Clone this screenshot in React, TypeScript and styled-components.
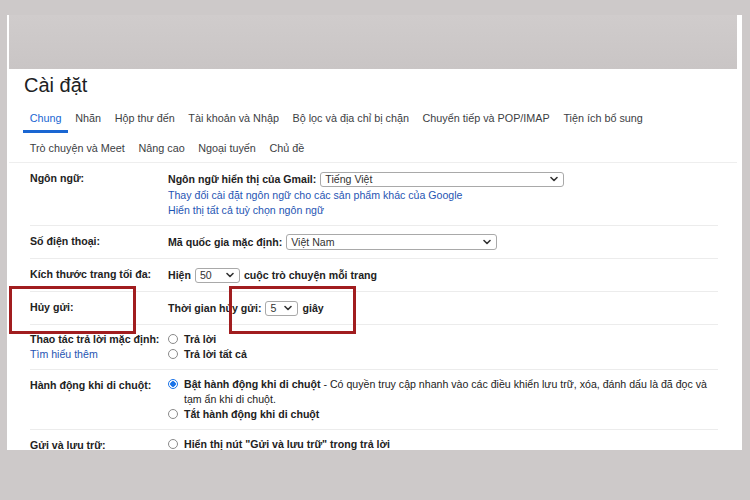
import React from "react";
import styled, { createGlobalStyle } from "styled-components";

const GlobalStyle = createGlobalStyle`
  html, body {
    margin: 0;
    padding: 0;
    background: #cdc9c9;
    font-family: "Liberation Sans", Arial, sans-serif;
    color: #222;
  }
`;

const tabsTop = ["Chung", "Nhãn", "Hộp thư đến", "Tài khoản và Nhập", "Bộ lọc và địa chỉ bị chặn", "Chuyển tiếp và POP/IMAP", "Tiện ích bổ sung"];
const tabsBottom = ["Trò chuyện và Meet", "Nâng cao", "Ngoại tuyến", "Chủ đề"];

const Chevron = () => (
  <svg width="8" height="6" viewBox="0 0 8 6">
    <path d="M1 1.5 L4 4.5 L7 1.5" fill="none" stroke="#333" strokeWidth="1.6" strokeLinecap="round" strokeLinejoin="round" />
  </svg>
);

const Dropdown = ({ value, w, h = 15 }: { value: string; w: number; h?: number }) => (
  <Select $w={w} $h={h}>
    <span>{value}</span>
    <Chevron />
  </Select>
);

const App = () => {
  return (
    <>
      <GlobalStyle />
      <Page>
        <Panel>
          <TopBand />
          <Title>Cài đặt</Title>
          <TabRow>
            {tabsTop.map((t, i) => (
              <Tab key={t} $active={i === 0}>{t}</Tab>
            ))}
          </TabRow>
          <TabRow $second>
            {tabsBottom.map((t) => (
              <Tab key={t} $second>{t}</Tab>
            ))}
          </TabRow>
          <Settings>
            <Row>
              <Label>Ngôn ngữ:</Label>
              <Value>
                <TallLine>
                  <b>Ngôn ngữ hiển thị của Gmail:</b>
                  <Dropdown value="Tiếng Việt" w={244} />
                </TallLine>
                <Link>Thay đổi cài đặt ngôn ngữ cho các sản phẩm khác của Google</Link>
                <Link>Hiển thị tất cả tuỳ chọn ngôn ngữ</Link>
              </Value>
            </Row>
            <Row>
              <Label>Số điện thoại:</Label>
              <Value>
                <TallLine>
                  <b>Mã quốc gia mặc định:</b>
                  <Dropdown value="Việt Nam" w={211} h={16} />
                </TallLine>
              </Value>
            </Row>
            <Row>
              <Label>Kích thước trang tối đa:</Label>
              <Value>
                <TallLine>
                  <b>Hiện</b>
                  <Dropdown value="50" w={45} />
                  <b>cuộc trò chuyện mỗi trang</b>
                </TallLine>
              </Value>
            </Row>
            <Row>
              <Label>Hủy gửi:</Label>
              <Value>
                <TallLine>
                  <b>Thời gian hủy gửi:</b>
                  <Dropdown value="5" w={33} />
                  <b>giây</b>
                </TallLine>
              </Value>
              <Highlight $left={-21} />
              <Highlight $left={199} />
            </Row>
            <Row>
              <Label $tight>
                Thao tác trả lời mặc định:
                <Link>Tìm hiểu thêm</Link>
              </Label>
              <Value>
                <Option>
                  <Radio />
                  <b>Trả lời</b>
                </Option>
                <Option>
                  <Radio />
                  <b>Trả lời tất cả</b>
                </Option>
              </Value>
            </Row>
            <Row>
              <Label>Hành động khi di chuột:</Label>
              <Value>
                <Option>
                  <Radio $checked />
                  <OptionText>
                    <b>Bật hành động khi di chuột</b> - Có quyền truy cập nhanh vào các điều khiển lưu trữ, xóa, đánh dấu là đã đọc và
                    <br />
                    tạm ẩn khi di chuột.
                  </OptionText>
                </Option>
                <Option>
                  <Radio />
                  <b>Tắt hành động khi di chuột</b>
                </Option>
              </Value>
            </Row>
            <Row>
              <Label>Gửi và lưu trữ:</Label>
              <Value>
                <Option>
                  <Radio />
                  <b>Hiển thị nút "Gửi và lưu trữ" trong trả lời</b>
                </Option>
              </Value>
            </Row>
          </Settings>
        </Panel>
      </Page>
    </>
  );
};

export default App;

const Page = styled.div`
  width: 750px;
  height: 500px;
  padding: 15px 0 0 7px;
  box-sizing: border-box;
`;

const Panel = styled.div`
  width: 735px;
  height: 435px;
  background: #fff;
  overflow: hidden;
  padding: 0 5px 0 2px;
  box-sizing: border-box;
`;

const TopBand = styled.div`
  height: 54px;
  background: linear-gradient(180deg, #d0cccc 0%, #c9c5c5 100%);
`;

const Title = styled.div`
  padding: 4px 0 0 15px;
  font-size: 20px;
  line-height: 24px;
  color: #202124;
`;

const TabRow = styled.div<{ $second?: boolean }>`
  display: flex;
  padding-left: 14px;
  border-bottom: ${(p) => (p.$second ? "1px solid #eee" : "none")};
`;

const Tab = styled.div<{ $active?: boolean; $second?: boolean }>`
  padding: ${(p) => (p.$second ? "8px 6.8px 6px" : "14px 6.8px 4px")};
  font-size: 10.8px;
  line-height: 15px;
  color: ${(p) => (p.$active ? "#1a66d2" : "#3c4043")};
  border-bottom: ${(p) => (p.$second ? "none" : p.$active ? "3px solid #1a66d2" : "3px solid transparent")};
`;

const Settings = styled.div`
  margin: 0 19px 0 21px;
`;

const Row = styled.div`
  position: relative;
  display: grid;
  grid-template-columns: 138px 1fr;
  padding: 7px 0;
  border-bottom: 1px solid #ececec;
  font-size: 10.6px;
  line-height: 15px;
`;

const Label = styled.div<{ $tight?: boolean }>`
  font-weight: 700;
  color: #222;
  display: flex;
  flex-direction: column;
  justify-content: flex-start;
  padding-top: ${(p) => (p.$tight ? 0 : 1)}px;
`;

const Value = styled.div`
  display: flex;
  flex-direction: column;
  color: #222;
`;

const TallLine = styled.div`
  display: flex;
  align-items: center;
  gap: 4px;
  height: 18px;
`;

const Link = styled.div`
  color: #1f55b3;
  font-weight: 400;
`;

const Select = styled.div<{ $w: number; $h: number }>`
  width: ${(p) => p.$w}px;
  height: ${(p) => p.$h}px;
  box-sizing: border-box;
  border: 1px solid #a9a9a9;
  border-radius: 3px;
  display: flex;
  align-items: center;
  justify-content: space-between;
  padding: 0 5px 0 4px;
  font-size: 10.6px;
  color: #333;
  background: #fff;
`;

const Option = styled.div`
  display: flex;
  align-items: flex-start;
  gap: 6px;
`;

const OptionText = styled.span`
  white-space: nowrap;
`;

const Radio = styled.span<{ $checked?: boolean }>`
  flex: none;
  width: 10px;
  height: 10px;
  margin-top: 2px;
  border-radius: 50%;
  box-sizing: border-box;
  border: 1px solid ${(p) => (p.$checked ? "#1a73e8" : "#8a8a8a")};
  background: ${(p) => (p.$checked ? "radial-gradient(circle, #1a73e8 0 2.5px, #fff 3px)" : "#fff")};
`;

const Highlight = styled.div<{ $left: number }>`
  position: absolute;
  left: ${(p) => p.$left}px;
  top: -6px;
  width: 127px;
  height: 48px;
  box-sizing: border-box;
  border: 3px solid #a11d1f;
  pointer-events: none;
`;
